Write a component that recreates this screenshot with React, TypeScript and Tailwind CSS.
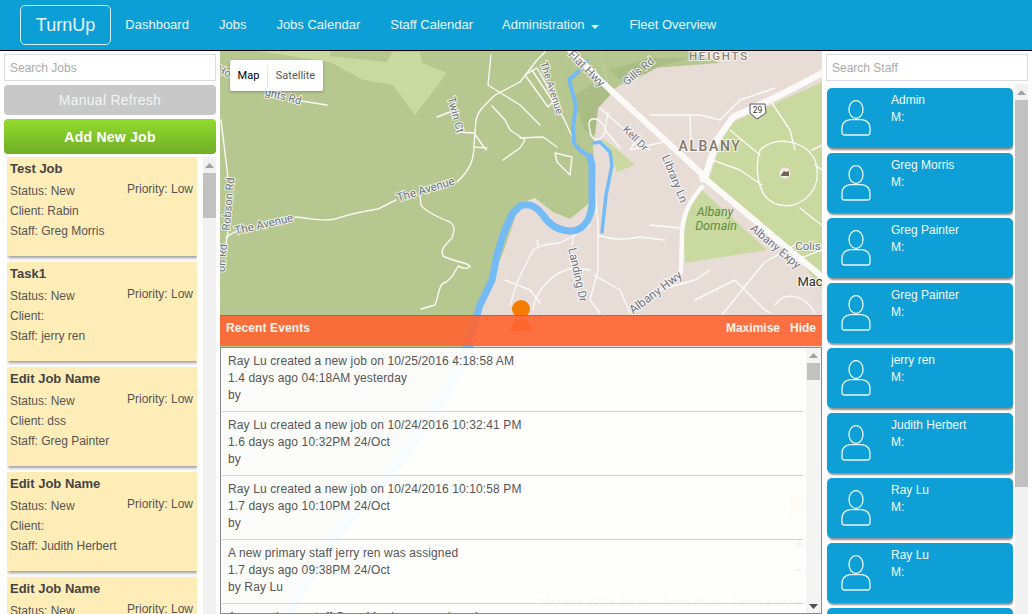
import React from "react";

const jobs = [
  { title: "Test Job", client: "Client: Rabin", staff: "Staff: Greg Morris" },
  { title: "Task1", client: "Client:", staff: "Staff: jerry ren" },
  { title: "Edit Job Name", client: "Client: dss", staff: "Staff: Greg Painter" },
  { title: "Edit Job Name", client: "Client:", staff: "Staff: Judith Herbert" },
  { title: "Edit Job Name", client: "Client:", staff: "Staff:" },
];
const staff = ["Admin", "Greg Morris", "Greg Painter", "Greg Painter", "jerry ren", "Judith Herbert", "Ray Lu", "Ray Lu", "Ray Lu"];
const events = [
  ["Ray Lu created a new job on 10/25/2016 4:18:58 AM", "1.4 days ago 04:18AM yesterday", "by"],
  ["Ray Lu created a new job on 10/24/2016 10:32:41 PM", "1.6 days ago 10:32PM 24/Oct", "by"],
  ["Ray Lu created a new job on 10/24/2016 10:10:58 PM", "1.7 days ago 10:10PM 24/Oct", "by"],
  ["A new primary staff jerry ren was assigned", "1.7 days ago 09:38PM 24/Oct", "by Ray Lu"],
  ["A new primary staff Greg Morris was assigned", "1.7 days ago 09:30PM 24/Oct", "by Ray Lu"],
];
const nav = ["Dashboard", "Jobs", "Jobs Calendar", "Staff Calendar"];

function Arrow({ down = false }: { down?: boolean }) {
  return (
    <svg width="9" height="5" viewBox="0 0 9 5" className="block">
      <path d={down ? "M0 0H9L4.5 5Z" : "M0 5H9L4.5 0Z"} fill={down ? "#505050" : "#a3a3a3"} />
    </svg>
  );
}

function Person() {
  return (
    <svg width="30" height="36" viewBox="0 0 30 36" fill="none" stroke="#e6f6fc" strokeWidth="1.3" className="block">
      <ellipse cx="15" cy="9.5" rx="7" ry="9" />
      <path d="M9 19.7 C4 20.5 1 24 1 28.5 V32.5 Q1 35 3.5 35 H26.5 Q29 35 29 32.5 V28.5 C29 24 26 20.5 21 19.7 Z" />
    </svg>
  );
}

function Label({ x, y, r = 0, children, size = 11, fill = "#6f7280", weight = 400, spacing = 0, italic = false, halo = true }: any) {
  return (
    <text
      x={x}
      y={y}
      textAnchor="middle"
      dominantBaseline="middle"
      transform={r ? `rotate(${r} ${x} ${y})` : undefined}
      fontFamily="Roboto, sans-serif"
      fontSize={size}
      fontWeight={weight}
      fontStyle={italic ? "italic" : "normal"}
      letterSpacing={spacing}
      fill={fill}
      stroke={halo ? "#ffffff" : "none"}
      strokeWidth={halo ? 2 : 0}
      strokeOpacity="0.8"
      paintOrder="stroke"
    >
      {children}
    </text>
  );
}

const thinRoads = [
  "M301 101 L327 105",
  "M221 120 L228 178 M228 232 L225 250",
  "M226 238 C232 232 236 232 240 230",
  "M295 217 C310 218 322 222 335 219 C350 214 365 211 378 209 L396 200",
  "M457 182 C470 170 474 160 474 145 L476 120 C478 110 485 105 495 95 L520 82 L537 60 L545 52",
  "M474 133 L486 150 M474 147 L487 148 M474 133 L458 132 M437 117 L450 112",
  "M491 55 L488 85 L520 105 L540 125",
  "M492 106 L505 120 L510 130 L525 140 L520 148 L503 160",
  "M520 138 L543 137 L557 147",
  "M555 153 L572 157 L570 175 L557 162 Z",
  "M525 75 L537 68 L555 100 L548 107 Z",
  "M532 70 L563 117 L577 147",
  "M420 195 L421 205 C425 212 440 218 450 222 C456 226 454 232 452 238 C445 245 440 250 443 256 C455 262 465 262 470 266 C468 270 462 268 458 266 C452 278 448 282 442 284 C438 290 438 298 435 305 L421 309",
  "M590 130 C585 115 600 115 606 130 C600 145 590 140 590 130 Z",
  "M600 108 L625 130 L650 150 M608 112 L605 130 L620 148",
  "M640 135 L630 150 L650 145 L664 142",
  "M594 160 L596 200 L598 225 L598 270 L590 300 L600 313",
  "M590 225 L575 235 L560 243 C545 244 540 246 533 250 L518 280 L510 305",
  "M538 245 L537 240 M575 228 L572 245",
  "M505 280 L530 290 L540 303",
  "M533 310 C535 290 555 270 575 268 L590 270",
  "M594 275 L620 290 L630 313",
  "M598 235 C610 240 625 240 640 237 L665 240 M650 225 L680 228",
  "M650 115 L700 115 L720 120 M690 115 L691 148 M720 120 L740 100 L775 88",
  "M730 130 L760 155 M712 160 L740 170 L762 185",
  "M770 100 L790 130 L795 150",
  "M760 150 C775 135 805 140 815 160 C825 190 800 210 780 205 C755 200 755 165 760 150 Z",
  "M812 150 L822 145 M815 165 L822 170 M800 208 L815 220 L822 225",
  "M722 315 L750 280 L765 262 L795 245",
  "M735 280 L765 310 L770 313 M695 300 L735 280",
  "M775 305 C785 290 805 295 815 313 M790 262 L822 250",
  "M660 290 L695 280 L710 270",
];

function MapCanvas() {
  return (
    <svg viewBox="220 51 602 563" className="absolute inset-0 w-full h-full block" preserveAspectRatio="none">
      <rect x="220" y="51" width="602" height="563" fill="#e8ddd6" />
      <path d="M220 51 H600 L610 95 L598 108 L593 147 L596 190 L587 205 L570 219 L553 212 L535 198 L520 203 L505 247 L487 293 L478 320 L445 390 L400 460 L340 530 L300 590 L295 614 H220 Z" fill="#b6c78f" />
      <path d="M600 51 H690 L720 63 L653 68 L620 85 L610 92 Z" fill="#b6c78f" />
      <path d="M257 51 H393 V52 H420 L422 63 L447 73 L415 115 L393 85 L363 80 L330 62 Z" fill="#cad9a0" />
      <path d="M330 51 H393 L387 62 L330 56 Z" fill="#b6c78f" />
      <path d="M600 137 L618 150 L635 165 L617 172 L610 150 Z" fill="#cad9a0" />
      <path d="M575 95 L600 80 L610 95 L598 108 L595 135 L585 130 L578 110 Z" fill="#a9bd84" />
      <path d="M610 70 L650 58 L690 58 L660 66 L625 85 Z" fill="#a9bd84" />
      <path d="M727 125 L822 82 V272 L708 182 Z" fill="#cad9a0" />
      <path d="M702 190 L767 250 L685 263 L683 217 Z" fill="#cad9a0" />
      <path d="M800 260 L822 272 V290 Z" fill="#cad9a0" />

      <g stroke="#fbfaf8" fill="none" strokeLinecap="round" strokeLinejoin="round">
        <path d="M565 45 L603 83 L703 175" strokeWidth="6" />
        <path d="M703 177 L822 277" strokeWidth="6" />
        <path d="M822 73 L790 90 L753 108 L733 117 L717 140 L705 177" strokeWidth="6.5" />
        <path d="M702 187 C690 200 682 215 682 235 L681 272" strokeWidth="4.5" />
        <circle cx="704" cy="178" r="5" fill="#fbfaf8" stroke="none" />
        <g strokeWidth="1.4">
          {thinRoads.map((d) => (
            <path key={d} d={d} />
          ))}
        </g>
      </g>

      <g fill="none" stroke="#74baf4" strokeLinecap="round" strokeLinejoin="round">
        <path d="M471 335 L480 305 L492 280 L497 255 L503 235 L512 214 L520 206 C530 202 537 207 543 215 C550 226 560 231 572 231 C582 230 590 222 592 205 L592 165 L590 157" strokeWidth="7" />
        <path d="M590 157 L580 150 L574 143 L573 128 L576 105 L569 80 L578 72" strokeWidth="4" />
        <path d="M594 143 L600 142 L610 152 L612 165 L606 195 L602 232" strokeWidth="3.5" />
        <path d="M578 72 L588 60" strokeWidth="2.5" />
      </g>
      <path d="M471 340 L445 395 L400 460 L340 530 L300 590 L290 614" fill="none" stroke="#74baf4" strokeWidth="10" />
      <g stroke="#ffffff" fill="none" strokeWidth="1.3" opacity="0.9">
        <path d="M475 510 L520 520 M500 440 L560 600 M590 400 L660 560 M700 420 L780 500 M640 480 L720 590" />
      </g>

      <Label x={224} y={72} r={25}>Ho</Label>
      <Label x={283} y={97} r={15}>ghts Rd</Label>
      <Label x={455} y={115} r={75}>Twin Ct</Label>
      <Label x={426} y={190} r={-17} size={11.5}>The Avenue</Label>
      <Label x={264} y={225} r={-13} size={11.5}>The Avenue</Label>
      <Label x={229} y={204} r={-85}>Robson Rd</Label>
      <Label x={223} y={258} r={-85}>on Rd</Label>
      <Label x={551} y={88} r={72} size={10.5}>The Avenue</Label>
      <Label x={586} y={69} r={45} size={12}>Flat Hwy</Label>
      <Label x={639} y={72} r={-40}>Gills Rd</Label>
      <Label x={719} y={57} size={11.5} fill="#8c8372" weight={500} spacing={1.8}>HEIGHTS</Label>
      <Label x={635} y={139} r={45} size={10.5}>Kell Dr</Label>
      <Label x={710} y={147} size={14} fill="#80766a" weight={500} spacing={1.6}>ALBANY</Label>
      <Label x={674} y={179} r={68} size={11.5}>Library Ln</Label>
      <Label x={715} y={213} size={12.5} fill="#5f8d3e" italic halo={false}>Albany</Label>
      <Label x={716} y={227} size={12.5} fill="#5f8d3e" italic halo={false}>Domain</Label>
      <Label x={775} y={247} r={40} size={11.5}>Albany Expy</Label>
      <Label x={808} y={247} size={11.5}>Colis</Label>
      <Label x={810} y={283} size={13} fill="#2e2e2e">Mac</Label>
      <Label x={656} y={293} r={-37} size={12}>Albany Hwy</Label>
      <Label x={577} y={275} r={78} size={11.5}>Landing Dr</Label>

      <path d="M750 104 H765 L766 113 L757 119 L750 113 Z" fill="#fff" stroke="#555" strokeWidth="1" />
      <text x="757.5" y="113" textAnchor="middle" fontSize="8.5" fontFamily="Roboto, sans-serif" fill="#333">29</text>
      <circle cx="785" cy="173" r="5.5" fill="#f1ede6" />
      <path d="M781 175 L784 171 L786 172 L789 171 V176 H781 Z" fill="#6e6355" />

      <circle cx="521" cy="309" r="9" fill="#f57c00" />
      <path d="M516 319 H526 L533 331 H509 Z" fill="#f57c00" />
      <text x="541" y="606" fontSize="10" fontFamily="Roboto, sans-serif" fill="#555">Map data ©2016 Google</text>
      <text x="662" y="606" fontSize="10" fontFamily="Roboto, sans-serif" fill="#555">Terms of Use</text>
      <text x="733" y="606" fontSize="10" fontFamily="Roboto, sans-serif" fill="#555">Report a map error</text>
      <rect x="790" y="498" width="14" height="18" fill="#f3c478" />
      <path d="M794 544 H804 M799 539 V549 M794 570 H804" stroke="#666" strokeWidth="2" />
    </svg>
  );
}

export default function App() {
  return (
    <div className="w-[1032px] h-[614px] overflow-hidden flex flex-col bg-white text-[12px] text-[#555] font-['Liberation_Sans',Arial,sans-serif]">
      <header className="h-[51px] shrink-0 flex items-start bg-[#0c9fd6] border-b border-black text-[13px] text-[#e9f7fc]">
        <div className="ml-[20px] mt-[5px] w-[91px] h-[40px] border border-[#d4eff9] rounded-[5px] flex items-center justify-center text-[18px] leading-none">TurnUp</div>
        <nav className="flex -ml-[0.7px]">
          {nav.map((n) => (
            <div key={n} className="px-[15px] h-[50px] leading-[50px]">{n}</div>
          ))}
          <div className="px-[14px] h-[50px] flex items-center gap-[7px]">
            Administration
            <span className="w-0 h-0 mt-[3px] border-x-[4px] border-x-transparent border-t-[4px] border-t-[#e9f7fc]" />
          </div>
          <div className="pl-[16px] h-[50px] leading-[50px]">Fleet Overview</div>
        </nav>
      </header>

      <main className="flex-1 flex min-h-0">
        <aside className="w-[220px] shrink-0 flex flex-col pt-[3px] bg-white overflow-hidden">
          <div className="mx-[4px] h-[27px] shrink-0 border border-[#dcdcdc] px-[5px] leading-[27px] text-[#aaa]">Search Jobs</div>
          <div className="mx-[4px] mt-[4px] h-[30px] shrink-0 rounded-[4px] bg-[#c8c8c8] text-[#f4f4f4] text-[14px] tracking-[0.25px] flex items-center justify-center">Manual Refresh</div>
          <div className="mx-[4px] mt-[4px] pt-[1px] h-[35px] shrink-0 rounded-[4px] bg-gradient-to-b from-[#93dc2f] to-[#70ad25] text-white text-[14px] font-bold tracking-[0.25px] flex items-center justify-center">Add New Job</div>
          <div className="flex-1 min-h-0 flex mt-[3px] pl-[7px] pr-[4px]">
            <div className="w-[190px] flex flex-col gap-[6px] overflow-hidden">
              {jobs.map((j, i) => (
                <div key={i} className="h-[99px] shrink-0 bg-[#ffedb8] shadow-[1px_2px_3px_rgba(0,0,0,0.4)] pl-[3px] pr-[3px] pt-[4px] text-[#555]">
                  <div className="text-[13px] font-bold text-[#444] leading-[15px]">{j.title}</div>
                  <div className="flex justify-between leading-[20px] mt-[3px]">
                    <div className="mt-[2px]">Status: New</div>
                    <div className="mr-[1px]">Priority: Low</div>
                  </div>
                  <div className="leading-[20px]">{j.client}</div>
                  <div className="leading-[20px]">{j.staff}</div>
                </div>
              ))}
            </div>
            <div className="ml-[6px] w-[13px] bg-[#f1f1f1] flex flex-col items-center">
              <div className="h-[16px] flex items-center"><Arrow /></div>
              <div className="w-full h-[45px] bg-[#c1c1c1]" />
            </div>
          </div>
        </aside>

        <section className="relative flex-1 min-w-0 overflow-hidden">
          <MapCanvas />
          <div className="absolute left-[10px] top-[9px] h-[31px] pt-[1px] flex items-center bg-white rounded-[2px] shadow-[0_1px_3px_rgba(0,0,0,0.25)] text-[11px] font-['Roboto',sans-serif]">
            <div className="w-[37px] text-center text-black">Map</div>
            <div className="w-px h-[23px] bg-[#e6e6e6]" />
            <div className="w-[55px] text-center text-[#565656]">Satellite</div>
          </div>
          <div className="absolute left-0 right-0 top-[264px] bottom-0 flex flex-col">
            <div className="h-[31px] shrink-0 flex items-center justify-between px-[6px] pb-[6px] bg-[#ff6432]/90 text-[#fdf3ee] font-bold border-t border-[#a96a50]">
              <span className="tracking-[0.1px]">Recent Events</span>
              <span className="flex gap-[10px]"><span>Maximise</span><span>Hide</span></span>
            </div>
            <div className="flex-1 min-h-0 flex mt-[1px] bg-white/95 border border-[#8a8a8a] overflow-hidden">
              <div className="flex-1 min-w-0 pl-px pr-[3px]">
                {events.map((e, i) => (
                  <div key={i} className="h-[64px] border-b border-[#d2d2d2] pl-[6px] pt-[5px] text-[#555] tracking-[0.12px]">
                    {e.map((t) => (
                      <div key={t} className="leading-[17px]">{t}</div>
                    ))}
                  </div>
                ))}
              </div>
              <div className="w-[15px] shrink-0 bg-[#f1f1f1]/80 flex flex-col items-center">
                <div className="h-[15px] flex items-center"><Arrow /></div>
                <div className="w-[13px] h-[17px] bg-[#c1c1c1]" />
                <div className="mt-auto h-[14px] flex items-center"><Arrow down /></div>
              </div>
            </div>
          </div>
        </section>

        <aside className="w-[210px] shrink-0 flex flex-col pt-[3px] bg-white overflow-hidden">
          <div className="mx-[4px] h-[27px] shrink-0 border border-[#dcdcdc] px-[5px] leading-[27px] text-[#aaa]">Search Staff</div>
          <div className="flex-1 min-h-0 flex mt-[3px] pl-[5px] pr-[4px]">
            <div className="w-[186px] pt-[4px] flex flex-col gap-[5px] overflow-hidden">
              {staff.map((s, i) => (
                <div key={i} className="h-[60px] shrink-0 flex bg-[#0e9fd6] rounded-[5px] shadow-[1px_2px_2px_rgba(0,0,0,0.45)] text-[#f2fafd]">
                  <div className="w-[64px] shrink-0 pl-[14px] pt-[12px]"><Person /></div>
                  <div className="pt-[4px]">
                    <div className="leading-[17px]">{s}</div>
                    <div className="leading-[17px]">M:</div>
                  </div>
                </div>
              ))}
            </div>
            <div className="ml-[2px] w-[13px] bg-[#f1f1f1] flex flex-col items-center">
              <div className="h-[16px] flex items-center"><Arrow /></div>
              <div className="w-full h-[387px] bg-[#c1c1c1]" />
            </div>
          </div>
        </aside>
      </main>
    </div>
  );
}
